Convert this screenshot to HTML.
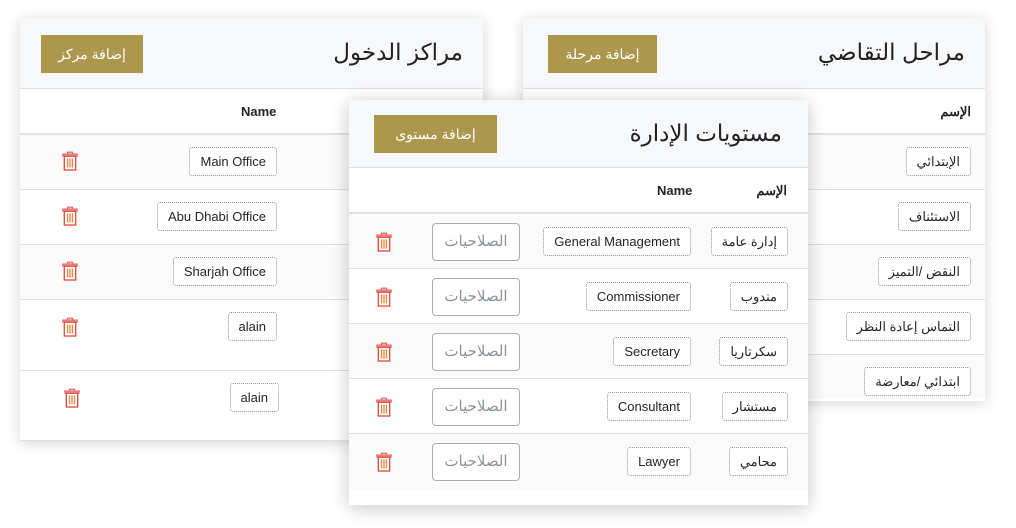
<!DOCTYPE html>
<html><head><meta charset="utf-8"><style>
*{box-sizing:border-box;margin:0;padding:0}
body{width:1016px;height:528px;background:#fff;position:relative;overflow:hidden;font-family:"Liberation Sans","Noto Sans CJK SC",sans-serif;color:#212529}
.p{position:absolute;background:#fff;box-shadow:0 2px 14px rgba(0,0,0,.16)}
.hd{position:absolute;left:0;right:0;top:0;background:#f7f8fa;border-bottom:1px solid #dee2e6}
.t{position:absolute;font-size:23px;color:#222;white-space:nowrap}
.btn{position:absolute;background:#ac974d;color:#fff;font-size:14px;display:flex;align-items:center;justify-content:center;white-space:nowrap}
.th{position:absolute;left:0;right:0;border-bottom:2px solid #dee2e6;font-size:13px;font-weight:bold}
.th span{position:absolute;top:15px;white-space:nowrap}
.r{position:absolute;left:0;right:0;border-bottom:1px solid #dee2e6}
.r.a{background:#fafafb}
.b{position:absolute;height:29px;border:1px dotted #8a96a3;border-radius:3px;font-size:13px;padding:0 10px;line-height:27px;white-space:nowrap;background:#fff}
.pm{position:absolute;width:88px;height:38px;border:1px solid #a5adb6;border-radius:4px;color:#8c939b;font-size:15px;text-align:center;line-height:36px;background:#fff}
.tr{position:absolute;width:16px;height:20px}
</style></head><body>
<svg width="0" height="0" style="position:absolute"><defs><g id="tr"><path d="M5.5 3V1.2h5V3" fill="none" stroke="#e0605a" stroke-width="1.2"/><rect x="0.8" y="3" width="14.4" height="2.2" fill="#f1a0a8" stroke="#e0605a" stroke-width="1"/><rect x="2.3" y="5.2" width="11.4" height="13.8" fill="none" stroke="#e2483a" stroke-width="1.3"/><path d="M5.6 7.5v9M8 7.5v9M10.4 7.5v9" stroke="#e8883a" stroke-width="1.3"/></g></defs></svg>

<!-- left panel -->
<div class="p" style="left:20px;top:18px;width:463px;height:423px">
 <div class="hd" style="height:71px"></div>
 <div class="t" style="right:20px;top:21px">مراكز الدخول</div>
 <div class="btn" style="left:21px;top:17px;width:102px;height:38px">إضافة مركز</div>
 <div class="th" style="top:71px;height:46px"><span style="left:221px">Name</span></div>
 <div class="r a" style="top:117px;height:55px"></div>
 <div class="r" style="top:172px;height:55px"></div>
 <div class="r a" style="top:227px;height:55px"></div>
 <div class="r" style="top:282px;height:71px"></div>
 <div class="r" style="top:353px;height:70px"></div>
 <div class="b" style="right:206px;top:129px">Main Office</div>
 <div class="b" style="right:206px;top:184px">Abu Dhabi Office</div>
 <div class="b" style="right:206px;top:239px">Sharjah Office</div>
 <div class="b" style="right:206px;top:294px">alain</div>
 <div class="b" style="right:204px;top:365px">alain</div>
 <svg class="tr" style="left:42px;top:133px"><use href="#tr"/></svg>
 <svg class="tr" style="left:42px;top:188px"><use href="#tr"/></svg>
 <svg class="tr" style="left:42px;top:243px"><use href="#tr"/></svg>
 <svg class="tr" style="left:42px;top:299px"><use href="#tr"/></svg>
 <svg class="tr" style="left:44px;top:370px"><use href="#tr"/></svg>
</div>

<!-- right panel -->
<div class="p" style="left:523px;top:18px;width:462px;height:383px">
 <div class="hd" style="height:71px"></div>
 <div class="t" style="right:20px;top:21px">مراحل التقاضي</div>
 <div class="btn" style="left:25px;top:17px;width:109px;height:38px">إضافة مرحلة</div>
 <div class="th" style="top:71px;height:46px"><span style="right:14px">الإسم</span></div>
 <div class="r a" style="top:117px;height:55px"></div>
 <div class="r" style="top:172px;height:55px"></div>
 <div class="r a" style="top:227px;height:55px"></div>
 <div class="r" style="top:282px;height:55px"></div>
 <div class="r a" style="top:337px;height:44px;border:0"></div>
 <div class="b" style="right:14px;top:129px">الإبتدائي</div>
 <div class="b" style="right:14px;top:184px">الاستئناف</div>
 <div class="b" style="right:14px;top:239px">النقض /التميز</div>
 <div class="b" style="right:14px;top:294px">التماس إعادة النظر</div>
 <div class="b" style="right:14px;top:349px">ابتدائي /معارضة</div>
</div>

<!-- middle panel -->
<div class="p" style="left:349px;top:100px;width:459px;height:405px;box-shadow:0 3px 18px rgba(0,0,0,.22)">
 <div class="hd" style="height:68px"></div>
 <div class="t" style="right:26px;top:20px">مستويات الإدارة</div>
 <div class="btn" style="left:25px;top:15px;width:123px;height:38px">إضافة مستوى</div>
 <div class="th" style="top:68px;height:46px"><span style="left:308px">Name</span><span style="right:21px">الإسم</span></div>
 <div class="r a" style="top:114px;height:55px"></div>
 <div class="r" style="top:169px;height:55px"></div>
 <div class="r a" style="top:224px;height:55px"></div>
 <div class="r" style="top:279px;height:55px"></div>
 <div class="r a" style="top:334px;height:55px;border:0"></div>
 <div class="b" style="right:20px;top:127px">إدارة عامة</div>
 <div class="b" style="right:117px;top:127px">General Management</div>
 <div class="b" style="right:20px;top:182px">مندوب</div>
 <div class="b" style="right:117px;top:182px">Commissioner</div>
 <div class="b" style="right:20px;top:237px">سكرتاريا</div>
 <div class="b" style="right:117px;top:237px">Secretary</div>
 <div class="b" style="right:20px;top:292px">مستشار</div>
 <div class="b" style="right:117px;top:292px">Consultant</div>
 <div class="b" style="right:20px;top:347px">محامي</div>
 <div class="b" style="right:117px;top:347px">Lawyer</div>
 <div class="pm" style="left:83px;top:123px">الصلاحيات</div>
 <div class="pm" style="left:83px;top:178px">الصلاحيات</div>
 <div class="pm" style="left:83px;top:233px">الصلاحيات</div>
 <div class="pm" style="left:83px;top:288px">الصلاحيات</div>
 <div class="pm" style="left:83px;top:343px">الصلاحيات</div>
 <svg class="tr" style="left:27px;top:132px"><use href="#tr"/></svg>
 <svg class="tr" style="left:27px;top:187px"><use href="#tr"/></svg>
 <svg class="tr" style="left:27px;top:242px"><use href="#tr"/></svg>
 <svg class="tr" style="left:27px;top:297px"><use href="#tr"/></svg>
 <svg class="tr" style="left:27px;top:352px"><use href="#tr"/></svg>
</div>
</body></html>
